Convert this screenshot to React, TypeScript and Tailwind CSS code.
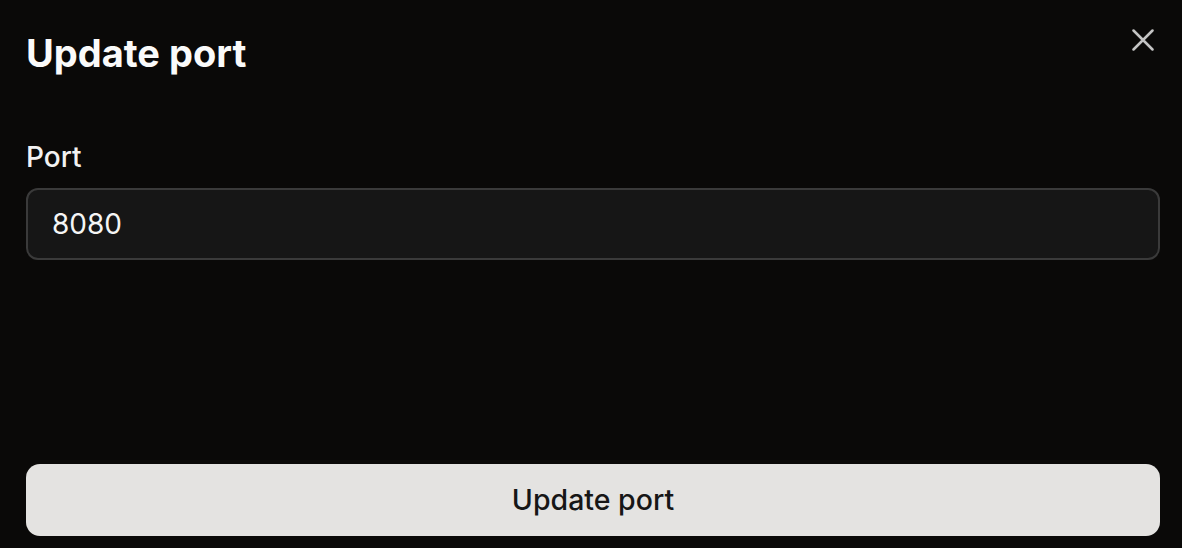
import React from "react";

export default function App() {
  const [port, setPort] = React.useState("8080");

  return (
    <div
      className="flex h-[548px] w-full flex-col bg-[#0a0908] pr-[22px] pb-[12px] pl-[26px] text-white"
      style={{ fontFamily: "Inter, 'Noto Sans', sans-serif" }}
    >
      {/* Header */}
      <div className="flex items-start justify-between pt-[27px]">
        <h1 className="text-[38px] leading-[52px] font-bold tracking-[0em] text-[#fafafa]">
          Update port
        </h1>
        <button className="mt-[2px] mr-[6px] text-[#c4c4c4]" aria-label="Close">
          <svg width="22" height="22" viewBox="0 0 22 22" fill="none" stroke="currentColor" strokeWidth="2.5" strokeLinecap="round">
            <path d="M1.5 1.5l19 19M20.5 1.5l-19 19" />
          </svg>
        </button>
      </div>

      {/* Field */}
      <label className="mt-[60px] block text-[28px] leading-[36px] font-medium text-[#f2f2f2]">
        Port
      </label>
      <input
        className="mt-[13px] h-[72px] w-full rounded-[12px] border-2 border-[#3a3a3a] bg-[#161616] px-[24px] text-[28px] text-[#f5f5f5] outline-none"
        value={port}
        onChange={(e) => setPort(e.target.value)}
      />

      {/* Footer */}
      <button className="mt-auto h-[72px] w-full rounded-[14px] bg-[#e4e3e1] text-[28.5px] font-medium text-[#161616]">
        Update port
      </button>
    </div>
  );
}
